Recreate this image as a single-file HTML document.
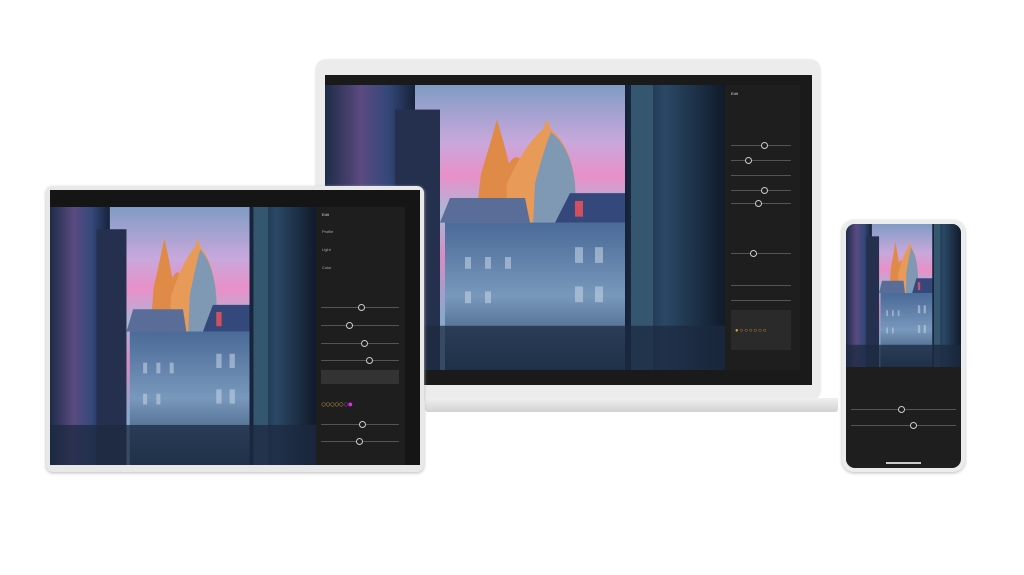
<!DOCTYPE html>
<html><head><meta charset="utf-8"><style>
body{margin:0;width:1024px;height:575px;background:#fff;position:relative;overflow:hidden;font-family:"Liberation Sans",sans-serif}
.a{position:absolute}
.pan{background:#1e1e1f}
.sl{position:absolute;height:1px;background:#555}
.kn{position:absolute;width:5px;height:5px;border:1px solid #ccc;border-radius:50%;background:#1e1e1f}
.tx{position:absolute;font-size:4px;color:#aaa}
</style></head><body>
<svg width="0" height="0" style="position:absolute"><defs>
<linearGradient id="sky" x1="0" y1="0" x2="0" y2="1"><stop offset="0" stop-color="#7f9cc4"/><stop offset=".2" stop-color="#c8a8dc"/><stop offset=".32" stop-color="#e890c8"/><stop offset=".45" stop-color="#a8b8d8"/><stop offset=".6" stop-color="#d88cc4"/><stop offset=".8" stop-color="#8aa8cc"/></linearGradient>
<linearGradient id="bl" x1="0" y1="0" x2="1" y2="0"><stop offset="0" stop-color="#1e2c48"/><stop offset=".4" stop-color="#5a4a80"/><stop offset=".7" stop-color="#34487a"/><stop offset="1" stop-color="#16223a"/></linearGradient>
<linearGradient id="br" x1="0" y1="0" x2="1" y2="0"><stop offset="0" stop-color="#142238"/><stop offset=".4" stop-color="#2a4866"/><stop offset="1" stop-color="#101a2a"/></linearGradient>
<linearGradient id="bm" x1="0" y1="0" x2="0" y2="1"><stop offset="0" stop-color="#4a6a98"/><stop offset=".5" stop-color="#7898bc"/><stop offset="1" stop-color="#2a4464"/></linearGradient>
<symbol id="photo" viewBox="0 0 400 290" preserveAspectRatio="none">
<rect width="400" height="290" fill="url(#sky)"/>
<path d="M150 145 L156 90 L165 60 L172 35 L179 60 L184 80 Q190 70 195 75 L195 145Z" fill="#e08a48"/>
<path d="M180 145 L182 100 Q200 60 218 45 L222 35 L226 45 Q246 62 250 100 L252 145Z" fill="#e89a58"/>
<path d="M208 145 L210 100 Q220 62 226 48 Q246 64 250 100 L252 145Z" fill="#7f98b4"/>
<rect x="120" y="140" width="195" height="150" fill="url(#bm)"/>
<path d="M115 140 L125 115 L200 115 L205 140Z" fill="#5a6c98"/>
<path d="M230 140 L245 110 L305 110 L315 140Z" fill="#34487c"/>
<rect x="250" y="118" width="8" height="16" fill="#d05060"/>
<rect x="0" y="0" width="90" height="290" fill="url(#bl)"/>
<rect x="70" y="25" width="45" height="265" fill="#24304e"/>
<rect x="300" y="0" width="100" height="290" fill="url(#br)"/>
<rect x="306" y="0" width="22" height="290" fill="#34566e"/>
<rect x="0" y="245" width="400" height="45" fill="#1c2a40" opacity=".75"/>
<g fill="#c8d6e6" opacity=".55"><rect x="140" y="175" width="6" height="12"/><rect x="160" y="175" width="6" height="12"/><rect x="180" y="175" width="6" height="12"/><rect x="250" y="165" width="8" height="16"/><rect x="270" y="165" width="8" height="16"/><rect x="140" y="210" width="6" height="12"/><rect x="160" y="210" width="6" height="12"/><rect x="250" y="205" width="8" height="16"/><rect x="270" y="205" width="8" height="16"/></g>
</symbol></defs></svg>

<!-- laptop -->
<div class="a" style="left:316px;top:60px;width:504px;height:340px;background:#ececec;border-radius:10px;box-shadow:0 0 2px #ccc"></div>
<div class="a" style="left:425px;top:398px;width:413px;height:14px;background:linear-gradient(#f0f0f0,#d2d2d2);border-radius:0 0 3px 3px"></div>
<div class="a" style="left:325px;top:75px;width:487px;height:310px;background:#1a1a1a"></div>
<svg class="a" style="left:325px;top:85px" width="400" height="285"><use href="#photo" width="400" height="285"/></svg>
<div class="a pan" style="left:725px;top:85px;width:75px;height:285px">
<div class="tx" style="left:6px;top:6px;color:#ddd">Edit</div>
<div class="sl" style="left:6px;top:60px;width:60px"></div><div class="sl" style="left:6px;top:75px;width:60px"></div><div class="sl" style="left:6px;top:90px;width:60px"></div><div class="sl" style="left:6px;top:105px;width:60px"></div><div class="sl" style="left:6px;top:118px;width:60px"></div><div class="sl" style="left:6px;top:168px;width:60px"></div><div class="sl" style="left:6px;top:200px;width:60px"></div><div class="sl" style="left:6px;top:215px;width:60px"></div>
<div class="kn" style="left:36px;top:57px"></div><div class="kn" style="left:20px;top:72px"></div><div class="kn" style="left:36px;top:102px"></div><div class="kn" style="left:30px;top:115px"></div><div class="kn" style="left:25px;top:165px"></div>
<div class="a" style="left:6px;top:225px;width:60px;height:40px;background:#2a2a2a"></div>
<div class="tx" style="left:10px;top:243px;color:#d9a030;font-size:6px;letter-spacing:1px">●○○○○○○</div>
</div>
<!-- tablet -->
<div class="a" style="left:46px;top:186px;width:378px;height:286px;background:#e8e8e8;border-radius:7px;box-shadow:0 1px 3px #bbb"></div>
<div class="a" style="left:50px;top:190px;width:370px;height:275px;background:#151515"></div>
<svg class="a" style="left:50px;top:207px" width="266" height="258"><use href="#photo" width="266" height="258"/></svg>
<div class="a pan" style="left:316px;top:207px;width:89px;height:258px">
<div class="tx" style="left:6px;top:5px;color:#ddd">Edit</div>
<div class="tx" style="left:6px;top:22px">Profile</div><div class="tx" style="left:6px;top:40px">Light</div><div class="tx" style="left:6px;top:58px">Color</div>
<div class="sl" style="left:5px;top:100px;width:78px"></div><div class="sl" style="left:5px;top:118px;width:78px"></div><div class="sl" style="left:5px;top:136px;width:78px"></div><div class="sl" style="left:5px;top:153px;width:78px"></div><div class="sl" style="left:5px;top:217px;width:78px"></div><div class="sl" style="left:5px;top:234px;width:78px"></div>
<div class="kn" style="left:42px;top:97px"></div><div class="kn" style="left:30px;top:115px"></div><div class="kn" style="left:45px;top:133px"></div><div class="kn" style="left:50px;top:150px"></div><div class="kn" style="left:43px;top:214px"></div><div class="kn" style="left:40px;top:231px"></div>
<div class="a" style="left:5px;top:163px;width:78px;height:14px;background:#333"></div>
<div class="tx" style="left:5px;top:192px;font-size:9px;letter-spacing:-1px;color:#c0a040">○○○○○<span style="color:#a040c0">○</span><span style="color:#e030e0">●</span></div>
</div>
<!-- phone -->
<div class="a" style="left:842px;top:220px;width:123px;height:252px;background:#ececec;border-radius:12px;box-shadow:0 1px 3px #bbb"></div>
<div class="a" style="left:846px;top:224px;width:115px;height:244px;background:#1e1e1f;border-radius:9px;overflow:hidden">
<svg class="a" style="left:0;top:0" width="115" height="143"><use href="#photo" width="115" height="143"/></svg>
<div class="sl" style="left:5px;top:185px;width:105px"></div><div class="sl" style="left:5px;top:201px;width:105px"></div>
<div class="kn" style="left:52px;top:182px"></div><div class="kn" style="left:64px;top:198px"></div>
<div class="a" style="left:40px;top:238px;width:35px;height:2px;background:#ccc"></div>
</div>
</body></html>
